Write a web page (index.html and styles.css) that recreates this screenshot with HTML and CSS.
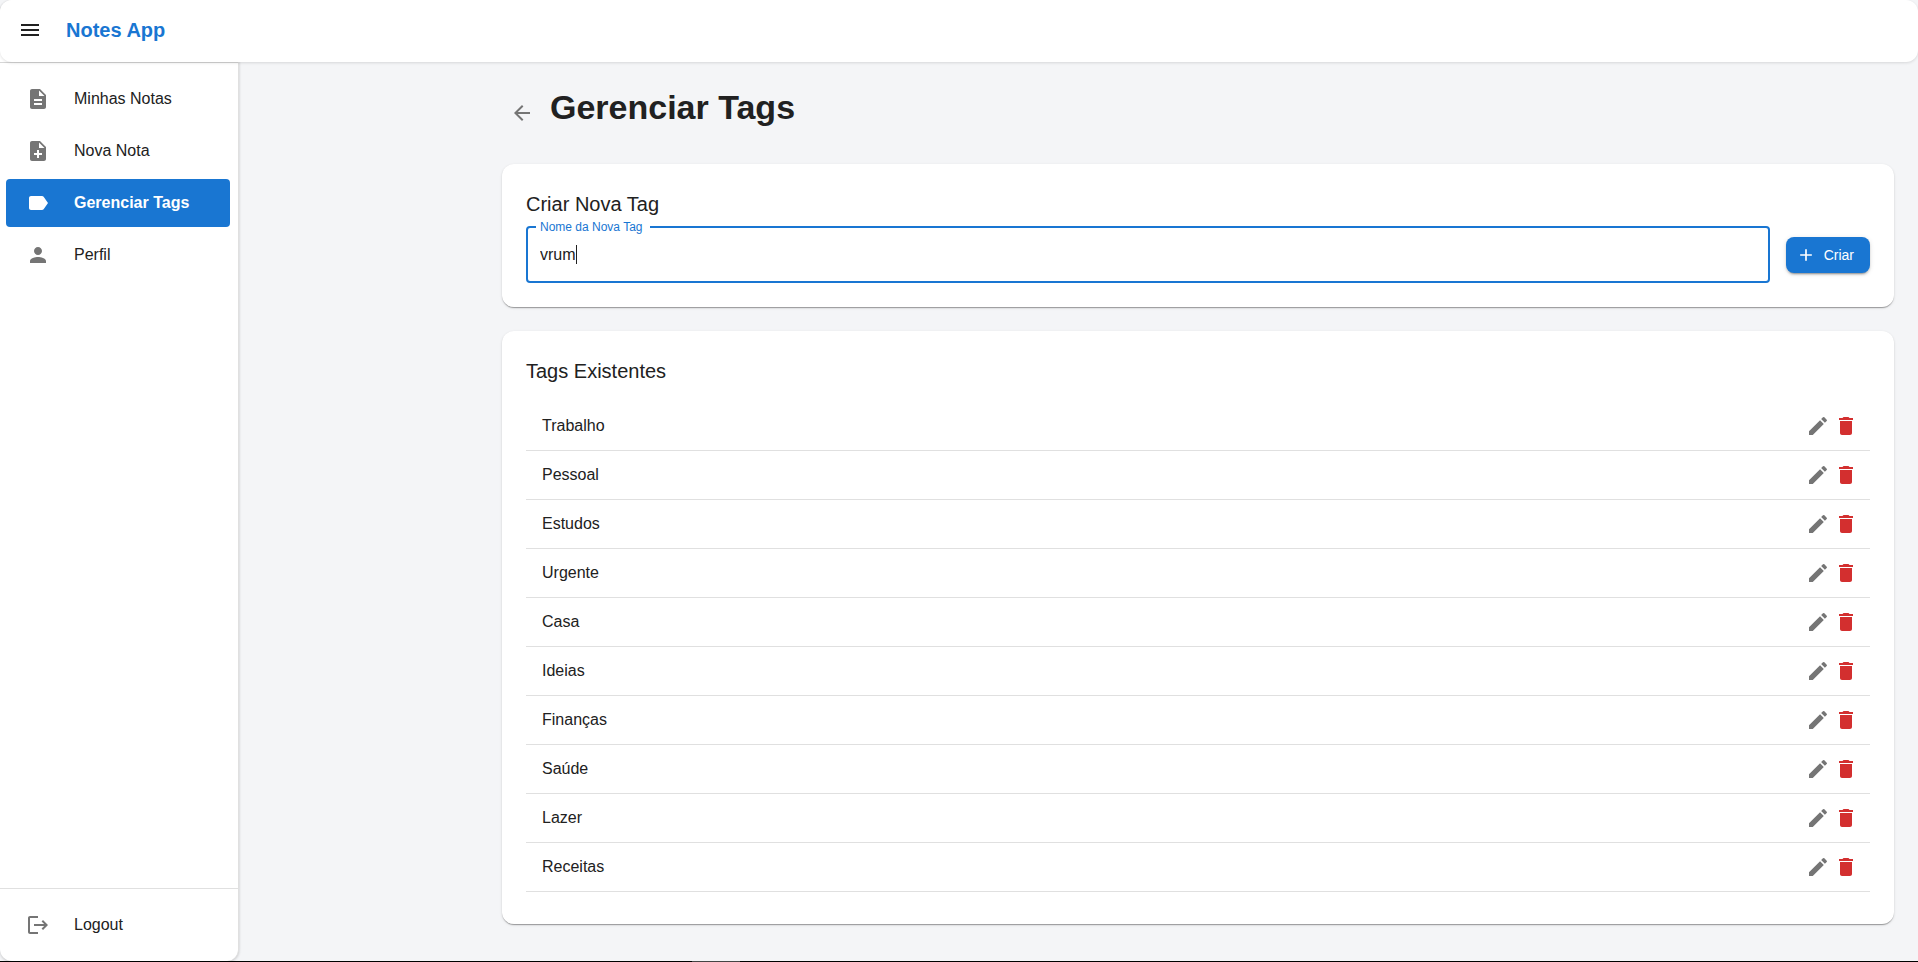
FILE: index.html
```html
<!DOCTYPE html>
<html lang="pt-BR">
<head>
<meta charset="utf-8">
<title>Notes App</title>
<meta name="viewport" content="width=device-width, initial-scale=1">
<link rel="stylesheet" href="styles.css">
</head>
<body>
<svg class="sprite" aria-hidden="true">
  <symbol id="menu" viewBox="0 0 24 24"><path d="M3 18h18v-2H3zm0-5h18v-2H3zm0-7v2h18V6z"/></symbol>
  <symbol id="doc" viewBox="0 0 24 24"><path d="M14 2H6c-1.1 0-1.99.9-1.99 2L4 20c0 1.1.89 2 1.99 2H18c1.1 0 2-.9 2-2V8zm2 16H8v-2h8zm0-4H8v-2h8zm-3-5V3.5L18.5 9z"/></symbol>
  <symbol id="doc-add" viewBox="0 0 24 24"><path d="M14 2H6c-1.1 0-1.99.9-1.99 2L4 20c0 1.1.89 2 1.99 2H18c1.1 0 2-.9 2-2V8zm2 14h-3v3h-2v-3H8v-2h3v-3h2v3h3zm-3-7V3.5L18.5 9z"/></symbol>
  <symbol id="label" viewBox="0 0 24 24"><path d="M17.63 5.84C17.27 5.33 16.67 5 16 5L5 5.01C3.9 5.01 3 5.9 3 7v10c0 1.1.9 1.99 2 1.99L16 19c.67 0 1.27-.33 1.63-.84L22 12z"/></symbol>
  <symbol id="person" viewBox="0 0 24 24"><path d="M12 12c2.21 0 4-1.79 4-4s-1.79-4-4-4-4 1.79-4 4 1.79 4 4 4m0 2c-2.67 0-8 1.34-8 4v2h16v-2c0-2.66-5.33-4-8-4"/></symbol>
  <symbol id="logout" viewBox="0 0 24 24"><path d="m17 7-1.41 1.41L18.17 11H8v2h10.17l-2.58 2.58L17 17l5-5zM4 5h8V3H4c-1.1 0-2 .9-2 2v14c0 1.1.9 2 2 2h8v-2H4z"/></symbol>
  <symbol id="back" viewBox="0 0 24 24"><path d="M20 11H7.83l5.59-5.59L12 4l-8 8 8 8 1.41-1.41L7.83 13H20z"/></symbol>
  <symbol id="add" viewBox="0 0 24 24"><path d="M19 13h-6v6h-2v-6H5v-2h6V5h2v6h6z"/></symbol>
  <symbol id="edit" viewBox="0 0 24 24"><path d="M3 17.25V21h3.75L17.81 9.94l-3.75-3.75zM20.71 7.04c.39-.39.39-1.02 0-1.41l-2.34-2.34a.9959.9959 0 0 0-1.41 0l-1.83 1.83 3.75 3.75z"/></symbol>
  <symbol id="trash" viewBox="0 0 24 24"><path d="M6 19c0 1.1.9 2 2 2h8c1.1 0 2-.9 2-2V7H6zM19 4h-3.5l-1-1h-5l-1 1H5v2h14z"/></symbol>
</svg>

<div class="app">
  <header class="topbar">
    <button class="icon-button" type="button" aria-label="Menu"><svg class="icon"><use href="#menu"/></svg></button>
    <span class="brand">Notes App</span>
  </header>

  <aside class="sidebar">
    <nav class="nav">
      <a class="nav-item" href="#"><svg class="icon"><use href="#doc"/></svg>Minhas Notas</a>
      <a class="nav-item" href="#"><svg class="icon"><use href="#doc-add"/></svg>Nova Nota</a>
      <a class="nav-item nav-item-active" href="#" aria-current="page"><svg class="icon"><use href="#label"/></svg>Gerenciar Tags</a>
      <a class="nav-item" href="#"><svg class="icon"><use href="#person"/></svg>Perfil</a>
    </nav>
    <div class="sidebar-footer">
      <button class="nav-item" type="button"><svg class="icon"><use href="#logout"/></svg>Logout</button>
    </div>
  </aside>

  <main class="main">
    <div class="page-head">
      <button class="icon-button icon-muted" type="button" aria-label="Voltar"><svg class="icon"><use href="#back"/></svg></button>
      <h1 class="page-title">Gerenciar Tags</h1>
    </div>

    <section class="card">
      <h2 class="card-title">Criar Nova Tag</h2>
      <form class="create-form">
        <div class="field">
          <label class="field-label" for="tag-name">Nome da Nova Tag</label>
          <input class="field-input" id="tag-name" type="text" value="vrum" autocomplete="off" autofocus>
          <span class="caret" aria-hidden="true"></span>
        </div>
        <button class="create-button" type="button"><svg class="icon icon-small"><use href="#add"/></svg>Criar</button>
      </form>
    </section>

    <section class="card">
      <h2 class="card-title">Tags Existentes</h2>
      <ul class="tag-list" id="tag-list"></ul>
    </section>
  </main>

  <div class="bottom-strip"><div class="bottom-mark"></div></div>
</div>
<script src="app.js"></script>
</body>
</html>
```
FILE: styles.css
```css
* { box-sizing: border-box; }

body {
  margin: 0;
  background: #f4f5f7;
  color: #212121;
  font-family: "Liberation Sans", Arial, sans-serif;
  font-size: 16px;
  line-height: 24px;
}

button { border: 0; padding: 0; background: none; color: inherit; font: inherit; cursor: pointer; }
h1, h2, ul { margin: 0; padding: 0; }

.sprite { display: none; }
.icon { display: block; flex: none; width: 24px; height: 24px; fill: currentColor; }
.icon-small { width: 20px; height: 20px; }

.app {
  display: grid;
  grid-template-columns: 239px 1fr;
  grid-template-rows: 62px 1fr 1px;
  min-height: 100vh;
}

.topbar {
  grid-area: 1 / 1 / 2 / 3;
  z-index: 1;
  display: flex;
  align-items: center;
  gap: 24px;
  padding: 0 18px 2px;
  border-radius: 12px;
  background: #fff;
  box-shadow: 0 1px 3px rgba(0, 0, 0, 0.12);
}
.brand { color: #1976d2; font-size: 20px; font-weight: 700; }

.sidebar {
  grid-area: 1 / 1 / 3 / 2;
  display: flex;
  flex-direction: column;
  justify-content: space-between;
  padding-top: 62px;
  border-right: 1px solid #e0e0e0;
  border-radius: 12px;
  background: #fff;
  box-shadow: 0 1px 3px rgba(0, 0, 0, 0.2);
}
.nav {
  display: flex;
  flex-direction: column;
  gap: 4px;
  padding: 12px 8px 0 6px;
  border-top: 1px solid #d6d6d6;
}
.nav-item {
  display: flex;
  align-items: center;
  gap: 24px;
  width: 100%;
  height: 48px;
  padding: 0 20px;
  border-radius: 4px;
  color: #212121;
  text-decoration: none;
}
.nav-item .icon { color: #757575; }
.nav-item-active { background: #1976d2; color: #fff; font-weight: 700; }
.nav-item-active .icon { color: #fff; }
.sidebar-footer { padding: 12px 8px 12px 6px; border-top: 1px solid #e0e0e0; }

.main {
  grid-area: 2 / 2 / 3 / 3;
  display: flex;
  flex-direction: column;
  gap: 24px;
  padding: 24px 24px 36px 263px;
}
.page-head { display: flex; align-items: center; gap: 16px; padding: 0 8px; }
.icon-muted { color: #757575; }
.page-title { padding-bottom: 12px; font-size: 34px; font-weight: 700; line-height: 42px; }

.card {
  padding: 24px;
  border-radius: 12px;
  background: #fff;
  box-shadow: 0 2px 1px -1px rgba(0, 0, 0, 0.2), 0 1px 1px rgba(0, 0, 0, 0.14), 0 1px 3px rgba(0, 0, 0, 0.12);
}
.card-title { font-size: 20px; font-weight: 400; line-height: 32px; }

.create-form { display: flex; align-items: center; gap: 16px; padding-top: 6px; }
.field { position: relative; flex: 1; }
.field-label {
  position: absolute;
  top: -6px;
  left: 10px;
  padding: 0 7px 0 4px;
  background: #fff;
  color: #1976d2;
  font-size: 12px;
  line-height: 14px;
}
.field-input {
  display: block;
  width: 100%;
  height: 57px;
  padding: 0 12px;
  border: 2px solid #1976d2;
  border-radius: 4px;
  outline: 0;
  background: #fff;
  color: #212121;
  font: inherit;
  caret-color: transparent;
}
.caret {
  position: absolute;
  top: 19px;
  left: 50px;
  width: 1px;
  height: 19px;
  background: #212121;
}
.create-button {
  display: flex;
  align-items: center;
  gap: 8px;
  height: 36px;
  padding: 0 16px 0 10px;
  border-radius: 8px;
  background: #1976d2;
  color: #fff;
  font-size: 14px;
  font-weight: 500;
  box-shadow: 0 3px 1px -2px rgba(0, 0, 0, 0.2), 0 2px 2px rgba(0, 0, 0, 0.14), 0 1px 5px rgba(0, 0, 0, 0.12);
}

.tag-list { padding: 15px 0 8px; list-style: none; }
.tag-row {
  display: flex;
  align-items: center;
  gap: 4px;
  height: 49px;
  padding: 0 12px 0 16px;
  border-bottom: 1px solid #e0e0e0;
}
.tag-name { flex: 1; }
.icon-danger { color: #d32f2f; }

.bottom-strip { grid-area: 3 / 1 / 4 / 3; padding-left: 36.1%; background: #000; }
.bottom-mark { width: 48px; height: 1px; background: #444; }
```
FILE: app.js
```js
const tags = ["Trabalho", "Pessoal", "Estudos", "Urgente", "Casa", "Ideias", "Finanças", "Saúde", "Lazer", "Receitas"];

document.getElementById("tag-list").innerHTML = tags.map((tag) => `
  <li class="tag-row">
    <span class="tag-name">${tag}</span>
    <button class="icon-button icon-muted" type="button" aria-label="Editar ${tag}"><svg class="icon"><use href="#edit"/></svg></button>
    <button class="icon-button icon-danger" type="button" aria-label="Excluir ${tag}"><svg class="icon"><use href="#trash"/></svg></button>
  </li>`).join("");

const input = document.getElementById("tag-name");
input.focus();
input.setSelectionRange(input.value.length, input.value.length);
```
